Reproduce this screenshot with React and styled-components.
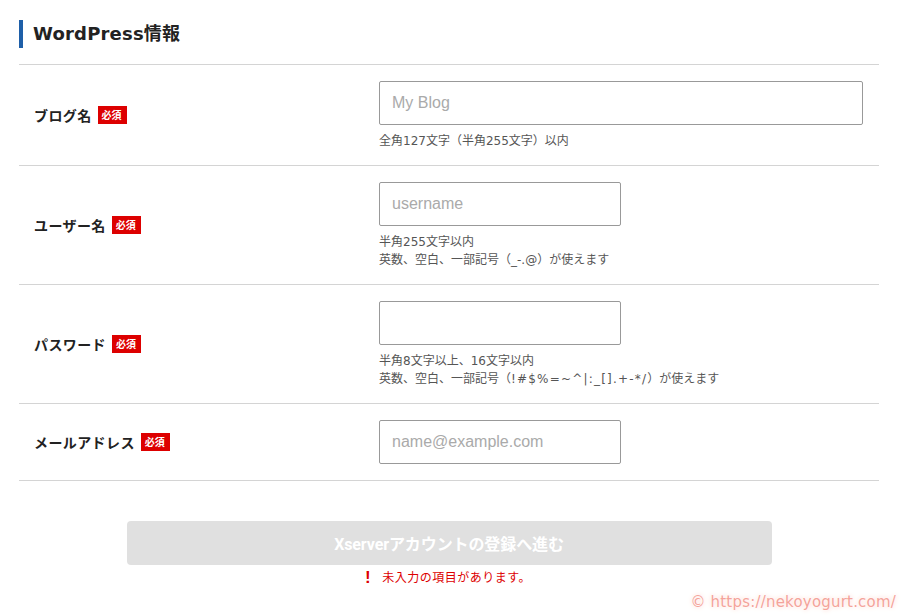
import React from 'react'
import styled, { createGlobalStyle } from 'styled-components'

const GlobalStyle = createGlobalStyle`
  html, body {
    margin: 0;
    padding: 0;
    background: #ffffff;
  }
  body {
    font-family: "DejaVu Sans", "Noto Sans CJK JP", sans-serif;
    color: #222;
  }
`

const Page = styled.div`
  position: relative;
  width: 905px;
  height: 616px;
  overflow: hidden;
`

const Section = styled.section`
  width: 860px;
  margin-left: 19px;
  padding-top: 20px;
`

const Heading = styled.h2`
  margin: 0;
  padding-left: 10px;
  border-left: 4px solid #1e5fa8;
  font-size: 18px;
  font-weight: bold;
  line-height: 28px;
  color: #222;
  letter-spacing: 0.2px;
`

const Table = styled.div`
  margin-top: 16px;
  border-top: 1px solid #d4d4d4;
`

const Row = styled.div`
  display: grid;
  grid-template-columns: 360px 1fr;
  align-items: center;
  padding: 16px 0;
  border-bottom: 1px solid #d4d4d4;
`

const Label = styled.div`
  display: flex;
  align-items: center;
  gap: 6px;
  padding-left: 15px;
  font-family: "Noto Sans CJK JP", sans-serif;
  font-size: 14px;
  font-weight: bold;
  letter-spacing: 0.4px;
  color: #222;
`

const Required = styled.span`
  display: inline-block;
  background: #dd0000;
  color: #fff;
  font-size: 10px;
  font-weight: bold;
  line-height: 18px;
  padding: 0 5px 0 4px;
  letter-spacing: 0;
`

const Field = styled.div`
  display: flex;
  flex-direction: column;
`

const Input = styled.input`
  box-sizing: border-box;
  width: ${p => (p.wide ? '484px' : '242px')};
  height: 44px;
  border: 1px solid #999;
  border-radius: 2px;
  padding: 0 12px;
  font-family: "Liberation Sans", Arial, sans-serif;
  font-size: 16px;
  color: #333;
  outline: none;
  &::placeholder {
    color: #aaa;
  }
`

const Note = styled.div`
  margin-top: 7px;
  margin-bottom: -1px;
  font-family: "DejaVu Sans", "Noto Sans CJK JP", sans-serif;
  font-size: 12px;
  line-height: 18px;
  color: #555;
`

const Symbols = styled.span`
  letter-spacing: 1.2px;
`

const Actions = styled.div`
  display: flex;
  flex-direction: column;
  align-items: center;
  margin-top: 40px;
`

const SubmitButton = styled.button`
  width: 645px;
  height: 44px;
  border: none;
  border-radius: 4px;
  background: #e0e0e0;
  color: #fff;
  font-family: "Roboto", "Noto Sans CJK JP", sans-serif;
  font-size: 16px;
  font-weight: bold;
  letter-spacing: -0.1px;
  cursor: not-allowed;
`

const ErrorText = styled.div`
  margin-top: 3px;
  display: flex;
  align-items: center;
  gap: 11px;
  margin-left: -2px;
  font-family: "Noto Sans CJK JP", sans-serif;
  font-size: 12px;
  line-height: 18px;
  letter-spacing: 0.5px;
  color: #dd0000;
`

const Bang = styled.span`
  font-family: "Liberation Sans", Arial, sans-serif;
  font-size: 17px;
  font-weight: bold;
  color: #dd0000;
  transform: translateY(1px);
`

const Watermark = styled.div`
  position: absolute;
  right: 9px;
  bottom: 5px;
  font-family: "DejaVu Sans", sans-serif;
  font-size: 15px;
  letter-spacing: 0.2px;
  color: #f4a39a;
  text-shadow: 0 0 2px #fff, 0 0 4px #ffe4df, 0 0 6px #ffdcd5;
`

const rows = [
  {
    label: 'ブログ名',
    placeholder: 'My Blog',
    wide: true,
    notes: ['全角127文字（半角255文字）以内'],
  },
  {
    label: 'ユーザー名',
    placeholder: 'username',
    notes: ['半角255文字以内', '英数、空白、一部記号（_-.@）が使えます'],
  },
  {
    label: 'パスワード',
    placeholder: '',
    type: 'password',
    notes: [
      '半角8文字以上、16文字以内',
      <>英数、空白、一部記号（<Symbols>!#$%=~^|:_[].+-*/</Symbols>）が使えます</>,
    ],
  },
  {
    label: 'メールアドレス',
    placeholder: 'name@example.com',
    notes: [],
  },
]

export default function App() {
  return (
    <Page>
      <GlobalStyle />
      <Section>
        <Heading>WordPress情報</Heading>
        <Table>
          {rows.map(r => (
            <Row key={r.label}>
              <Label>
                {r.label}
                <Required>必須</Required>
              </Label>
              <Field>
                <Input wide={r.wide} type={r.type || 'text'} placeholder={r.placeholder} />
                {r.notes.length > 0 && (
                  <Note>
                    {r.notes.map((n, i) => (
                      <div key={i}>{n}</div>
                    ))}
                  </Note>
                )}
              </Field>
            </Row>
          ))}
        </Table>
        <Actions>
          <SubmitButton disabled>Xserverアカウントの登録へ進む</SubmitButton>
          <ErrorText>
            <Bang>!</Bang>
            未入力の項目があります。
          </ErrorText>
        </Actions>
      </Section>
      <Watermark>© https://nekoyogurt.com/</Watermark>
    </Page>
  )
}
